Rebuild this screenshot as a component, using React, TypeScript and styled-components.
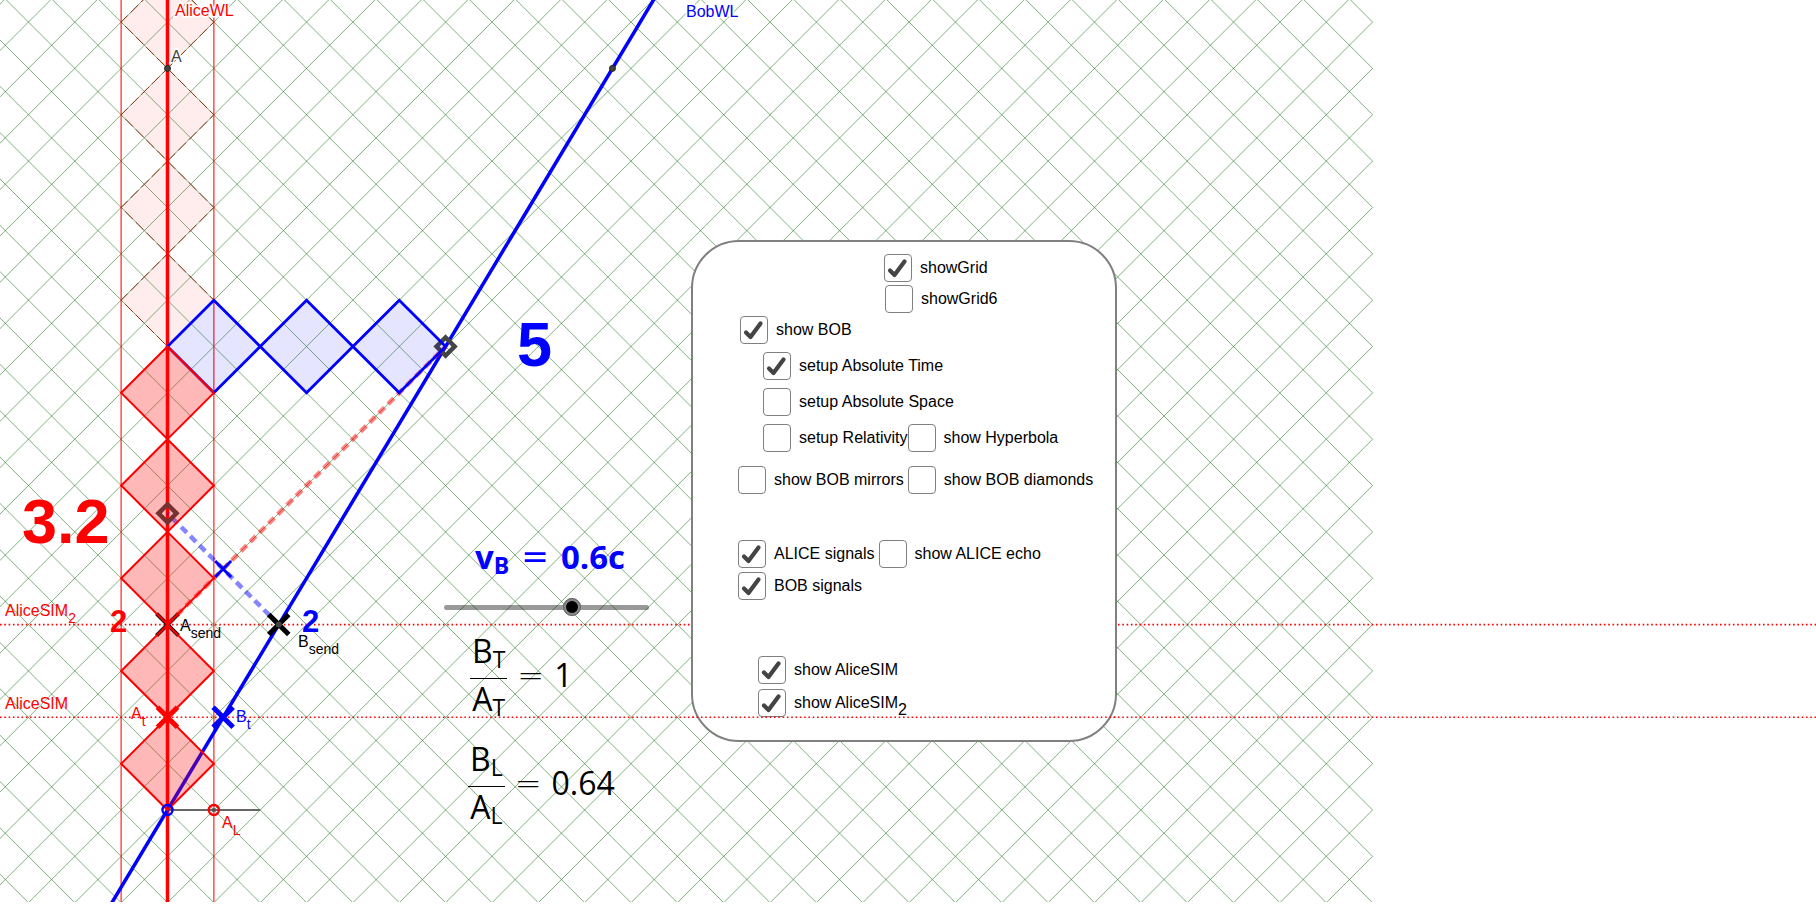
import React from "react";
import styled, { createGlobalStyle, css } from "styled-components";

const GlobalStyle = createGlobalStyle`
  body {
    margin: 0;
    background: #fff;
    color: #000;
    font-family: "Liberation Sans", Arial, sans-serif;
    font-size: 16px;
  }
`;

/* ---- spacetime geometry ---- */

const UNIT = 92.7;
const ORIGIN_X = 167.5;
const ORIGIN_Y = 810;
const VIEW_HEIGHT = 902;
const SPEED = 0.6;

const px = (x: number) => ORIGIN_X + x * UNIT;
const py = (t: number) => ORIGIN_Y - t * UNIT;

const GRID_RIGHT = px(13);

const diamond = (cx: number, cy: number, r: number) =>
  `${cx},${cy - r} ${cx + r},${cy} ${cx},${cy + r} ${cx - r},${cy}`;

const gridPath = () => {
  const step = UNIT / 2;
  let d = "";
  for (let k = -40; k <= 60; k++) {
    const y = ORIGIN_Y - k * step;
    d += `M${px(-3)} ${y - 3 * UNIT}L${GRID_RIGHT} ${y + 13 * UNIT}`;
    d += `M${px(-3)} ${y + 3 * UNIT}L${GRID_RIGHT} ${y - 13 * UNIT}`;
  }
  return d;
};

/* ---- styled parts ---- */

const Stage = styled.main`
  position: relative;
  overflow: hidden;
`;

const Diagram = styled.svg`
  display: block;
  width: 100%;
  height: ${VIEW_HEIGHT}px;
`;

const Overlay = styled(Diagram)`
  position: absolute;
  top: 0;
  left: 0;
  pointer-events: none;
`;

const Label = styled.text<{ $halo?: boolean }>`
  font-size: 16px;
  ${(p) =>
    p.$halo &&
    css`
      paint-order: stroke;
      stroke: #fff;
      stroke-width: 3px;
    `}
`;

const SubLabel = styled.tspan`
  font-size: 14px;
`;

const Count = styled.text<{ $size: number }>`
  font-size: ${(p) => p.$size}px;
  font-weight: 700;
`;

const CanvasItem = styled.div<{ $x: number; $y: number }>`
  position: absolute;
  left: ${(p) => p.$x}px;
  top: ${(p) => p.$y}px;
`;

const Formula = styled(CanvasItem)<{ $bold?: boolean }>`
  display: flex;
  align-items: center;
  font-family: "Open Sans", "Noto Sans", sans-serif;
  font-size: ${(p) => (p.$bold ? 33 : 32)}px;
  line-height: 40px;
  font-weight: ${(p) => (p.$bold ? 700 : 400)};
  color: ${(p) => (p.$bold ? "#00f" : "#000")};
  white-space: nowrap;
`;

const Equals = styled.span<{ $bold?: boolean }>`
  margin: 0 ${(p) => (p.$bold ? 12 : 10)}px;
  font-family: "DejaVu Sans", sans-serif;
  font-weight: ${(p) => (p.$bold ? 400 : 200)};
`;

const Fraction = styled.span`
  display: flex;
  flex-direction: column;
  align-items: center;
`;

const Numerator = styled.span`
  padding: 0 2px 7px;
  border-bottom: 1px solid #000;
`;

const Denominator = styled.span`
  padding: 0 2px;
`;

const Sub = styled.span`
  font-size: 23px;
  line-height: 0;
  vertical-align: -5px;
`;

const SpeedSlider = styled.input`
  appearance: none;
  display: block;
  width: 205px;
  height: 18px;
  margin: 0;
  background: transparent;

  &::-webkit-slider-runnable-track {
    height: 5px;
    border-radius: 3px;
    background: rgba(0, 0, 0, 0.4);
  }

  &::-webkit-slider-thumb {
    appearance: none;
    box-sizing: border-box;
    width: 18px;
    height: 18px;
    margin-top: -7px;
    border: 3px solid #888;
    outline: 1px solid #666;
    outline-offset: -1px;
    border-radius: 50%;
    background: #000;
  }
`;

const Panel = styled(CanvasItem).attrs({ as: "form" })`
  box-sizing: border-box;
  width: 426px;
  padding: 12px 0 23px;
  border: 2px solid #808080;
  border-radius: 48px;
  background: #fff;
`;

const Group = styled.div<{ $gap: number; $before?: number }>`
  display: flex;
  flex-direction: column;
  gap: ${(p) => p.$gap}px;
  margin-top: ${(p) => p.$before ?? 0}px;
`;

const Row = styled.div<{ $indent: number; $gap?: number }>`
  display: flex;
  gap: ${(p) => p.$gap ?? 0}px;
  padding-left: ${(p) => p.$indent}px;
`;

const Option = styled.label`
  position: relative;
  display: flex;
  align-items: center;
  gap: 8px;
  height: 28px;
  white-space: nowrap;
`;

const Box = styled.input`
  appearance: none;
  box-sizing: border-box;
  width: 28px;
  height: 28px;
  margin: 0;
  border: 1px solid #808080;
  border-radius: 4px;
  background: #fff;

  & + svg {
    visibility: hidden;
  }

  &:checked + svg {
    visibility: visible;
  }
`;

const Tick = styled.svg`
  position: absolute;
  left: 0;
  top: 0;
  width: 28px;
  height: 28px;
  pointer-events: none;
`;

const OptionSub = styled.span`
  font-size: 16px;
  line-height: 0;
  vertical-align: -7px;
`;

/* ---- components ---- */

function Check({ on, children }: { on?: boolean; children: React.ReactNode }) {
  return (
    <Option>
      <Box type="checkbox" defaultChecked={on} />
      <Tick viewBox="0 0 28 28" aria-hidden="true">
        <path
          d="M6 16.5L10.5 21L20.5 7.5"
          fill="none"
          stroke="#444"
          strokeWidth="4.2"
          strokeLinecap="round"
          strokeLinejoin="round"
        />
      </Tick>
      <span>{children}</span>
    </Option>
  );
}

function Cross({ x, y, color, r = 10, width = 5 }: { x: number; y: number; color: string; r?: number; width?: number }) {
  return (
    <path
      d={`M${x - r} ${y - r}L${x + r} ${y + r}M${x - r} ${y + r}L${x + r} ${y - r}`}
      stroke={color}
      strokeWidth={width}
    />
  );
}

function SimLine({ t }: { t: number }) {
  return (
    <line x1="0" x2="100%" y1={py(t)} y2={py(t)} stroke="#f00" strokeWidth="1.6" strokeDasharray="1.6 2.7" />
  );
}

function Spacetime() {
  return (
    <Diagram role="img" aria-label="Spacetime diagram">
      <path d={gridPath()} stroke="#006400" strokeOpacity="0.5" strokeWidth="1" fill="none" />

      {[5.5, 6.5, 7.5, 8.5].map((t) => (
        <polygon
          key={t}
          points={diamond(px(0), py(t), UNIT / 2)}
          fill="rgba(255,0,0,0.07)"
          stroke="#8b2500"
          strokeWidth="0.9"
          strokeDasharray="11 4"
        />
      ))}

      <SimLine t={1} />
      <SimLine t={2} />

      <line x1={px(0)} y1={py(0)} x2={px(1)} y2={py(0)} stroke="#666" strokeWidth="2" />
      <line x1={px(-0.5)} y1="0" x2={px(-0.5)} y2={VIEW_HEIGHT} stroke="#f00" strokeOpacity="0.7" strokeWidth="1.5" />
      <line x1={px(0.5)} y1="0" x2={px(0.5)} y2={VIEW_HEIGHT} stroke="#f00" strokeOpacity="0.7" strokeWidth="1.5" />

      <Cross x={px(0)} y={py(2)} color="#111" r={11} width={4} />
      <line x1={px(0)} y1="0" x2={px(0)} y2={VIEW_HEIGHT} stroke="#f00" strokeWidth="3.5" />

      <line x1={px(-SPEED)} y1={py(-1)} x2={px(9 * SPEED)} y2={py(9)} stroke="#00f" strokeWidth="3.5" />
      <line
        x1={px(0)}
        y1={py(2)}
        x2={px(3)}
        y2={py(5)}
        stroke="#f00"
        strokeOpacity="0.5"
        strokeWidth="4.5"
        strokeDasharray="8 5"
      />
      <line
        x1={px(1.2)}
        y1={py(2)}
        x2={px(0)}
        y2={py(3.2)}
        stroke="#00f"
        strokeOpacity="0.48"
        strokeWidth="4.5"
        strokeDasharray="8 5"
      />

      {[px(0), px(3)].map((x, i) => (
        <polygon
          key={x}
          points={diamond(x, py(i ? 5 : 3.2), 9)}
          fill="none"
          stroke="#444"
          strokeWidth="4.5"
        />
      ))}

      {[0.5, 1.5, 2.5].map((x) => (
        <polygon
          key={x}
          points={diamond(px(x), py(5), UNIT / 2)}
          fill="rgba(0,0,255,0.1)"
          stroke="#00f"
          strokeWidth="2.8"
        />
      ))}
      {[0.5, 1.5, 2.5, 3.5, 4.5].map((t) => (
        <polygon
          key={t}
          points={diamond(px(0), py(t), UNIT / 2)}
          fill="rgba(255,0,0,0.28)"
          stroke="#f00"
          strokeWidth="2"
        />
      ))}

      <Cross x={px(0)} y={py(1)} color="#f00" />
      <Cross x={px(0.6)} y={py(1)} color="#00f" />
      <Cross x={px(0.6)} y={py(2.6)} color="#00f" r={8} width={3} />
      <Cross x={px(1.2)} y={py(2)} color="#000" />
      <circle cx={px(1.2)} cy={py(2)} r="3" fill="#444" />

      <circle cx={px(0)} cy={py(8)} r="3" fill="#444" stroke="#222" />
      <circle cx={px(8 * SPEED)} cy={py(8)} r="3" fill="#444" stroke="#222" />
      <circle cx={px(0)} cy={py(0)} r="5" fill="none" stroke="#00f" strokeWidth="2.4" />
      <circle cx={px(0.5)} cy={py(0)} r="2" fill="#555" />
      <circle cx={px(0.5)} cy={py(0)} r="5" fill="none" stroke="#f00" strokeWidth="2.4" />

      <Label x="175" y="16" fill="#f00" $halo>AliceWL</Label>
      <Label x="171" y="62" fill="#444" $halo>A</Label>
      <Label x="686" y="17" fill="#00f" $halo>BobWL</Label>
      <Label x="5" y="616" fill="#f00">
        AliceSIM<SubLabel dy="7">2</SubLabel>
      </Label>
      <Label x="5" y="709" fill="#f00">AliceSIM</Label>
      <Label x="180" y="631">
        A<SubLabel dy="7">send</SubLabel>
      </Label>
      <Label x="298" y="647">
        B<SubLabel dy="7">send</SubLabel>
      </Label>
      <Label x="131" y="719" fill="#f00">
        A<SubLabel dy="7">t</SubLabel>
      </Label>
      <Label x="236" y="722" fill="#00f">
        B<SubLabel dy="7">t</SubLabel>
      </Label>
      <Label x="222" y="828" fill="#f00">
        A<SubLabel dy="7">L</SubLabel>
      </Label>

      <Count x="22" y="543" fill="#f00" $size={63}>3.2</Count>
      <Count x="517" y="366" fill="#00f" $size={63}>5</Count>
      <Count x="110" y="632" fill="#f00" $size={31}>2</Count>
      <Count x="302" y="632" fill="#00f" $size={31}>2</Count>
    </Diagram>
  );
}

function Controls() {
  return (
    <Panel $x={691} $y={240}>
      <Group $gap={3}>
        <Row $indent={191}>
          <Check on>showGrid</Check>
        </Row>
        <Row $indent={192}>
          <Check>showGrid6</Check>
        </Row>
      </Group>
      <Group $gap={8} $before={3}>
        <Row $indent={47}>
          <Check on>show BOB</Check>
        </Row>
        <Row $indent={70}>
          <Check on>setup Absolute Time</Check>
        </Row>
        <Row $indent={70}>
          <Check>setup Absolute Space</Check>
        </Row>
        <Row $indent={70}>
          <Check>setup Relativity</Check>
          <Check>show Hyperbola</Check>
        </Row>
      </Group>
      <Group $gap={46} $before={14}>
        <Row $indent={45} $gap={4}>
          <Check>show BOB mirrors</Check>
          <Check>show BOB diamonds</Check>
        </Row>
        <Row $indent={45} $gap={4}>
          <Check on>ALICE signals</Check>
          <Check>show ALICE echo</Check>
        </Row>
      </Group>
      <Group $gap={4} $before={4}>
        <Row $indent={45}>
          <Check on>BOB signals</Check>
        </Row>
      </Group>
      <Group $gap={5} $before={56}>
        <Row $indent={65}>
          <Check on>show AliceSIM</Check>
        </Row>
        <Row $indent={65}>
          <Check on>
            show AliceSIM<OptionSub>2</OptionSub>
          </Check>
        </Row>
      </Group>
    </Panel>
  );
}

export default function App() {
  return (
    <Stage>
      <GlobalStyle />
      <Spacetime />

      <Formula $x={475} $y={537} $bold>
        <span>
          v<Sub>B</Sub>
        </span>
        <Equals $bold>=</Equals>
        <span>0.6c</span>
      </Formula>

      <CanvasItem $x={444} $y={598}>
        <SpeedSlider type="range" min={0} max={0.94} step={0.01} defaultValue={SPEED} aria-label="Speed of Bob" />
      </CanvasItem>

      <Formula $x={470} $y={631}>
        <Fraction>
          <Numerator>
            B<Sub>T</Sub>
          </Numerator>
          <Denominator>
            A<Sub>T</Sub>
          </Denominator>
        </Fraction>
        <Equals>=</Equals>
        <span>1</span>
      </Formula>

      <Formula $x={468} $y={739}>
        <Fraction>
          <Numerator>
            B<Sub>L</Sub>
          </Numerator>
          <Denominator>
            A<Sub>L</Sub>
          </Denominator>
        </Fraction>
        <Equals>=</Equals>
        <span>0.64</span>
      </Formula>

      <Controls />

      <Overlay aria-hidden="true">
        <clipPath id="panel-area">
          <rect x="692" y="700" width="425" height="40" />
        </clipPath>
        <g clipPath="url(#panel-area)">
          <SimLine t={1} />
        </g>
      </Overlay>
    </Stage>
  );
}
